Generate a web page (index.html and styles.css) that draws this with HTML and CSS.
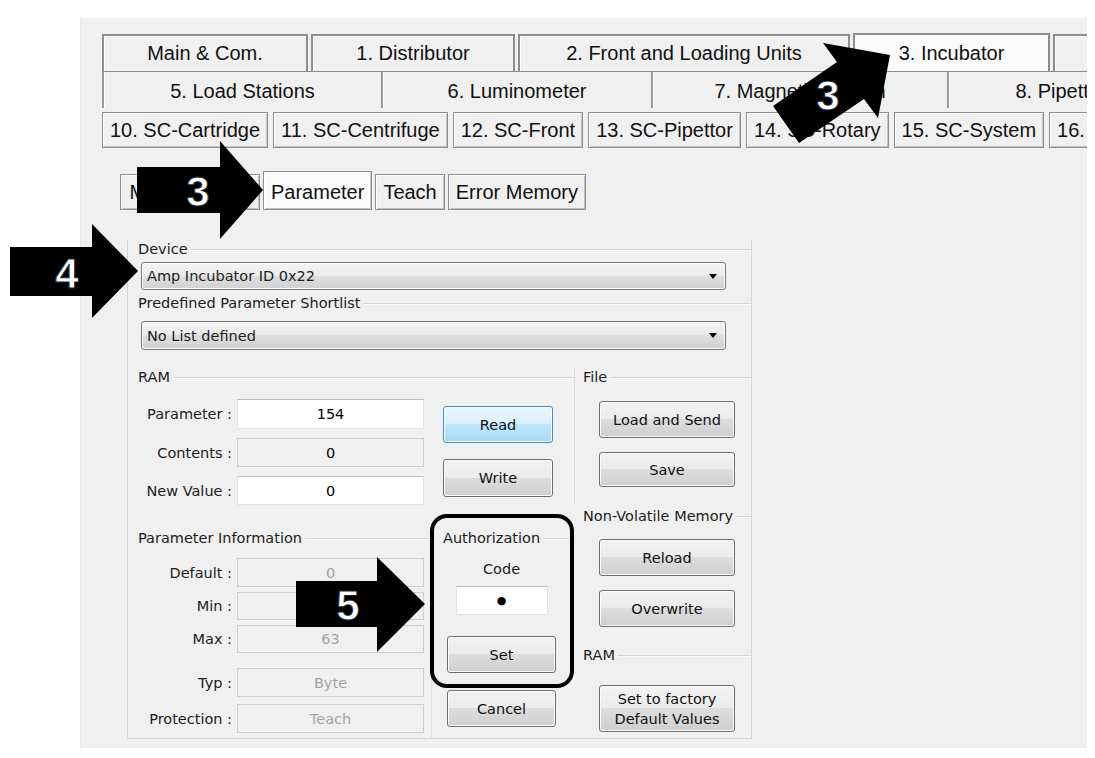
FILE: index.html
```html
<!DOCTYPE html>
<html lang="en">
<head>
  <meta charset="UTF-8" />
  <title>Service Tool - Parameter</title>
  <link rel="stylesheet" href="styles.css">
</head>
<body>

  <div class="window">
    <div class="tabs-top">
      <div class="t1" style="width:206px">Main &amp; Com.</div>
      <div class="t1" style="width:204px">1. Distributor</div>
      <div class="t1" style="width:332px">2. Front and Loading Units</div>
      <div class="t1 sel" style="width:197px">3. Incubator</div>
      <div class="t1" style="width:220px">4. Rotor</div>
    </div>
    <div class="tabs-mid">
      <div class="t2" style="width:279px">5. Load Stations</div>
      <div class="t2" style="width:270px">6. Luminometer</div>
      <div class="t2" style="width:296px">7. Magnetic Station</div>
      <div class="t2" style="width:226px">8. Pipettor</div>
    </div>
    <div class="tabs-low">
      <div class="t3">10. SC-Cartridge</div>
      <div class="t3">11. SC-Centrifuge</div>
      <div class="t3">12. SC-Front</div>
      <div class="t3">13. SC-Pipettor</div>
      <div class="t3">14. SC-Rotary</div>
      <div class="t3">15. SC-System</div>
      <div class="t3">16. SC-Transport</div>
    </div>

    <div class="subtabs">
      <div class="st" style="width:140px">Manual Mode</div>
      <div class="st sel">Parameter</div>
      <div class="st">Teach</div>
      <div class="st">Error Memory</div>
    </div>

    <div class="panel">
      <div class="ghead">Device</div>
      <div class="combo first"><span>Amp Incubator ID 0x22</span><i class="caret"></i></div>
      <div class="ghead short-top">Predefined Parameter Shortlist</div>
      <div class="combo second"><span>No List defined</span><i class="caret"></i></div>

      <div class="lower">
        <div class="left">
          <div class="ram-section">
            <div class="ghead">RAM</div>
            <div class="ram-body">
              <div class="fields">
                <div class="frow h30"><label>Parameter :</label><div class="inp">154</div></div>
                <div class="frow h29 mt9"><label>Contents :</label><div class="inp ro">0</div></div>
                <div class="frow h29 mt9"><label>New Value :</label><div class="inp">0</div></div>
              </div>
              <div class="ram-btns">
                <div class="btn blue read">Read</div>
                <div class="btn write">Write</div>
              </div>
            </div>
          </div>

          <div class="info-row">
            <div class="pinfo">
              <div class="ghead">Parameter Information</div>
              <div class="frow h29 mt11"><label>Default :</label><div class="inp dis">0</div></div>
              <div class="frow h28 mt5"><label>Min :</label><div class="inp dis">0</div></div>
              <div class="frow h28 mt5"><label>Max :</label><div class="inp dis">63</div></div>
              <div class="frow h29 mt15"><label>Typ :</label><div class="inp dis">Byte</div></div>
              <div class="frow h29 mt7"><label>Protection :</label><div class="inp dis">Teach</div></div>
            </div>
            <div class="auth">
              <div class="ghead">Authorization</div>
              <div class="auth-body">
                <div class="code-label">Code</div>
                <div class="inp code">&#9679;</div>
                <div class="btn set">Set</div>
                <div class="btn cancel">Cancel</div>
              </div>
            </div>
          </div>
        </div>

        <div class="right">
          <div class="ghead">File</div>
          <div class="btn rbtn load">Load and Send</div>
          <div class="btn rbtn save">Save</div>
          <div class="ghead nvm">Non-Volatile Memory</div>
          <div class="btn rbtn reload">Reload</div>
          <div class="btn rbtn overwrite">Overwrite</div>
          <div class="ghead ram2">RAM</div>
          <div class="btn rbtn factory">Set to factory<br>Default Values</div>
        </div>
      </div>
    </div>
  </div>

  <!-- annotation arrows drawn over the screenshot -->
  <svg class="annot" width="1095" height="758" viewBox="0 0 1095 758">
    <polygon points="773,106 837,62 823,43 890,55 878,118 864,99 799,143" />
    <polygon points="137,167 220,167 220,141 263,190 220,239 220,213 137,213" />
    <polygon points="10,247 92,247 92,224 138,271 92,318 92,296 10,296" />
    <polygon points="296,581 377,581 377,557 425,604 377,652 377,627 296,627" />
    <rect x="432" y="516" width="140" height="170" rx="15" ry="15" class="ring" />
    <text x="828" y="110">3</text>
    <text x="198" y="206">3</text>
    <text x="67" y="288">4</text>
    <text x="348" y="620">5</text>
  </svg>

</body>
</html>
```

FILE: styles.css
```css
* {
  box-sizing: border-box;
}

body {
  margin: 0;
  width: 1095px;
  height: 758px;
  overflow: hidden;
  position: relative;
  background: #fff;
  font-family: 'Liberation Sans', Arial, sans-serif;
  color: #111;
}

.window {
  margin: 18px 0 0 80px;
  width: 1007px;
  height: 730px;
  background: #f0f0f0;
  border-left: 1px solid #e2e9f1;
  padding: 15px 0 0 21px;
  overflow: hidden;
}

/* big tab rows */
.tabs-top,
.tabs-mid,
.tabs-low {
  display: flex;
  white-space: nowrap;
  font-size: 20px;
}

.tabs-top {
  height: 38px;
  gap: 3px;
  align-items: flex-end;
}

.t1 {
  flex: none;
  height: 37px;
  border: 2px solid #8e8e8e;
  border-bottom: none;
  box-shadow: inset 1px 1px #fff;
  display: flex;
  align-items: center;
  justify-content: center;
  overflow: hidden;
}

.t1.sel {
  height: 38px;
  background: #fbfbfb;
}

.tabs-mid {
  height: 37px;
  border-top: 1px solid #8e8e8e;
}

.t2 {
  flex: none;
  padding-top: 3px;
  border-left: 2px solid #9a9a9a;
  box-shadow: inset 1px 0 #fff;
  display: flex;
  align-items: center;
  justify-content: center;
  overflow: hidden;
}

.tabs-low {
  margin-top: 4px;
  height: 36px;
  gap: 5px;
}

.t3 {
  flex: none;
  padding: 0 7px;
  border: 1px solid #8e8e8e;
  box-shadow: inset 1px 1px #fff, inset -1px -1px #c4c4c4;
  display: flex;
  align-items: center;
}

/* second level tabs */
.subtabs {
  display: flex;
  gap: 3px;
  align-items: flex-end;
  height: 39px;
  margin: 23px 0 0 18px;
  font-size: 20px;
  white-space: nowrap;
}

.st {
  height: 36px;
  padding: 0 7px;
  border: 1px solid #8e8e8e;
  box-shadow: inset 1px 1px #fff, inset -1px -1px #c4c4c4;
  display: flex;
  align-items: center;
  justify-content: center;
}

.st.sel {
  height: 39px;
  padding-top: 3px;
  background: #fbfbfb;
}

/* parameter panel */
.panel {
  margin: 30px 0 0 25px;
  width: 625px;
  height: 499px;
  border: 1px solid #d6d6d6;
  border-top: none;
  font-family: 'DejaVu Sans', Tahoma, sans-serif;
  font-size: 14.5px;
  color: #1c1c1c;
}

.ghead {
  display: flex;
  align-items: center;
  height: 18px;
  padding-left: 10px;
  white-space: nowrap;
}

.ghead::after {
  content: "";
  flex: 1;
  margin-left: 3px;
  border-top: 1px solid #d5d5d5;
  box-shadow: 0 1px #fafafa;
}

.short-top {
  margin-top: 4px;
}

.combo {
  margin-left: 13px;
  width: 585px;
  display: flex;
  align-items: center;
  justify-content: space-between;
  padding: 0 6px 0 5px;
  border: 1px solid #7a7a7a;
  border-radius: 3px;
  background: linear-gradient(#f4f4f4 0%, #ebebeb 50%, #dedede 50%, #d2d2d2 100%);
  box-shadow: inset 0 0 0 1px #fbfbfb;
}

.combo.first {
  margin-top: 4px;
  height: 28px;
}

.combo.second {
  margin-top: 9px;
  height: 29px;
}

.caret {
  width: 0;
  height: 0;
  border-left: 4.5px solid transparent;
  border-right: 4.5px solid transparent;
  border-top: 5px solid #000;
  margin-right: 2px;
}

.lower {
  display: flex;
  margin-top: 18px;
}

.left {
  width: 447px;
}

.ram-section {
  border-right: 1px solid #dedede;
}

.ram-body {
  display: flex;
  margin-top: 13px;
}

.fields {
  width: 296px;
}

.frow {
  display: flex;
  align-items: stretch;
}

.frow label {
  width: 109px;
  padding-right: 5px;
  text-align: right;
  display: flex;
  align-items: center;
  justify-content: flex-end;
  white-space: nowrap;
}

.h30 { height: 30px; }
.h29 { height: 29px; }
.h28 { height: 28px; }
.mt5 { margin-top: 5px; }
.mt7 { margin-top: 7px; }
.mt9 { margin-top: 9px; }
.mt11 { margin-top: 11px; }
.mt15 { margin-top: 15px; }

.inp {
  width: 187px;
  background: #fff;
  border: 1px solid #e0e3e8;
  border-top-color: #b9bcc2;
  display: flex;
  align-items: center;
  justify-content: center;
  color: #000;
}

.inp.ro {
  background: #f0f0f0;
  border-color: #cfcfcf;
}

.inp.dis {
  background: #f0f0f0;
  border-color: #cfcfcf;
  color: #a3a3a3;
}

.btn {
  display: flex;
  align-items: center;
  justify-content: center;
  text-align: center;
  line-height: 20px;
  border: 1px solid #707070;
  border-radius: 3px;
  background: linear-gradient(#f3f3f3 0%, #ebebeb 50%, #dddddd 50%, #cfcfcf 100%);
  box-shadow: inset 0 0 0 1px #fbfbfb;
  color: #111;
}

.btn.blue {
  border-color: #3c8fce;
  background: linear-gradient(#eaf6fd 0%, #d9f0fc 50%, #bee6fd 50%, #a7d9f5 100%);
}

.ram-btns {
  margin-left: 19px;
  width: 110px;
}

.read {
  margin-top: 7px;
  height: 37px;
}

.write {
  margin-top: 16px;
  height: 38px;
}

.info-row {
  display: flex;
  margin-top: 24px;
}

.pinfo {
  width: 304px;
  height: 210px;
  border-right: 1px solid #dedede;
}

.auth {
  width: 143px;
}

.auth .ghead {
  padding-left: 11px;
}

.auth-body {
  display: flex;
  flex-direction: column;
  align-items: center;
  padding-right: 4px;
}

.code-label {
  margin-top: 14px;
  line-height: 16px;
}

.inp.code {
  margin-top: 9px;
  width: 92px;
  height: 29px;
  font-size: 11px;
}

.set,
.cancel {
  width: 109px;
  height: 37px;
}

.set {
  margin-top: 21px;
}

.cancel {
  margin-top: 17px;
}

.right {
  flex: 1;
}

.right .ghead {
  padding-left: 8px;
}

.rbtn {
  margin-left: 24px;
  width: 136px;
  height: 37px;
  margin-top: 14px;
}

.load { margin-top: 15px; }
.save { height: 35px; }
.nvm { margin-top: 20px; }
.ram2 { margin-top: 19px; }

.factory {
  margin-top: 21px;
  height: 47px;
}

/* annotations */
.annot {
  position: absolute;
  left: 0;
  top: 0;
  pointer-events: none;
}

.annot polygon {
  fill: #000;
}

.annot .ring {
  fill: none;
  stroke: #000;
  stroke-width: 4;
}

.annot text {
  font-family: 'Liberation Sans', Arial, sans-serif;
  font-weight: bold;
  font-size: 42px;
  text-anchor: middle;
  fill: #fff;
  stroke: #1b2836;
  stroke-width: 1;
}
```
